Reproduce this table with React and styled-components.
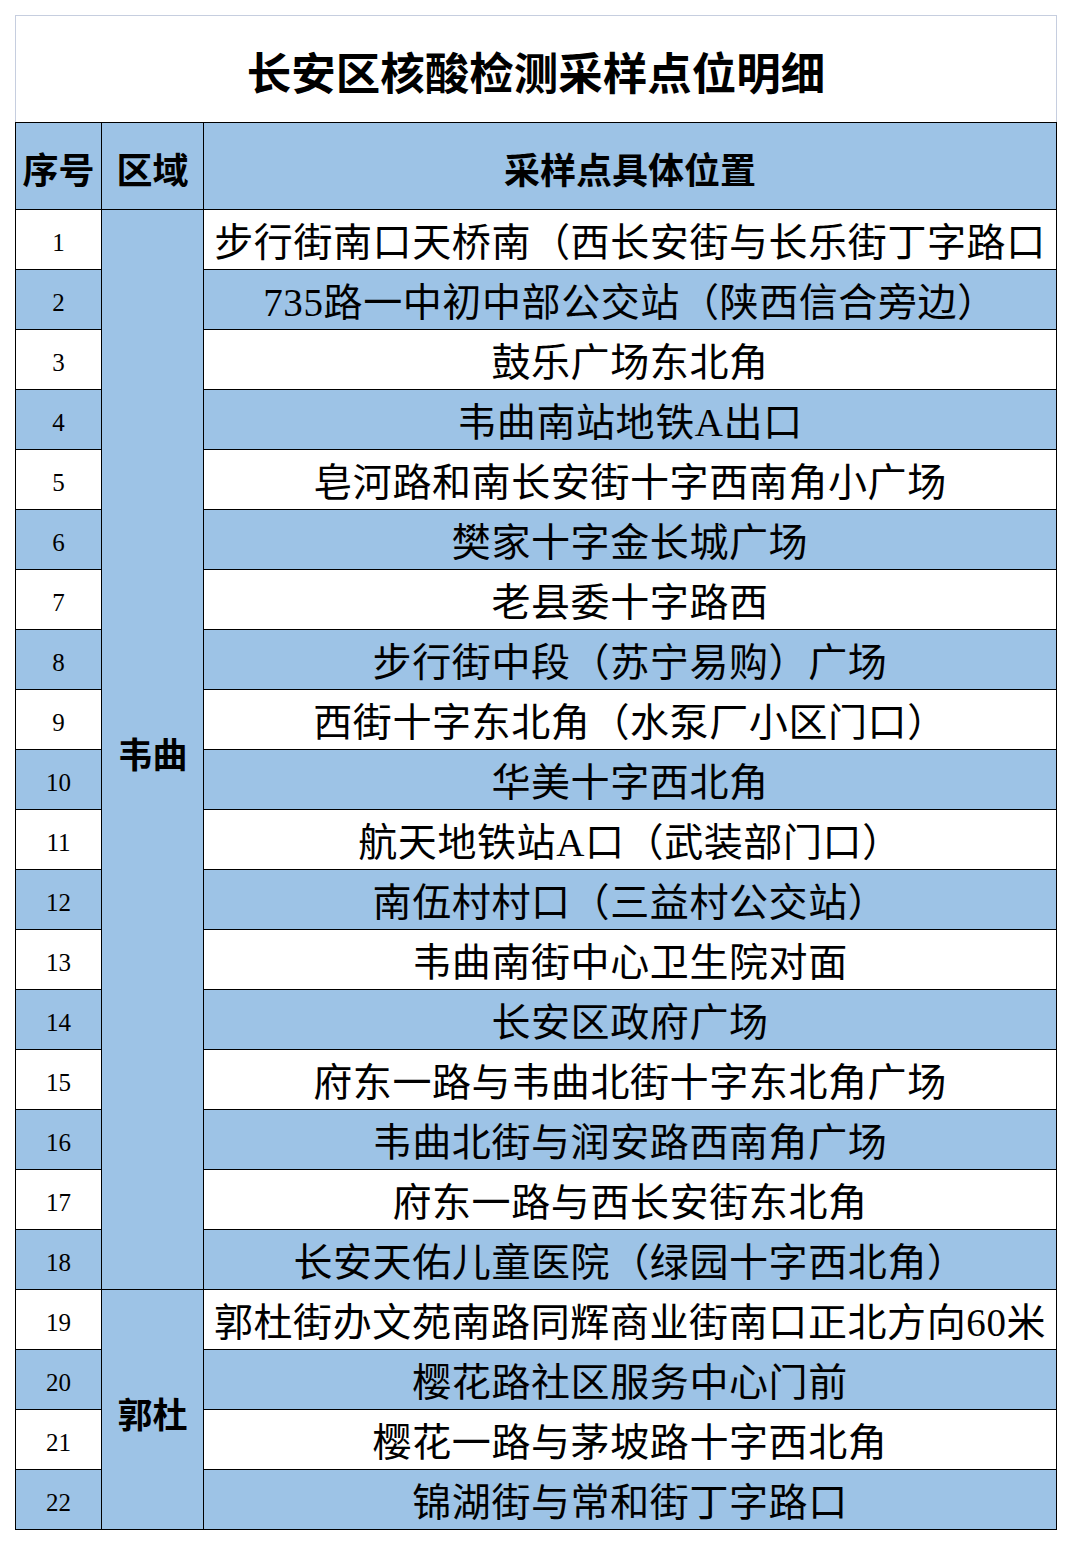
import React from 'react'
import styled, { createGlobalStyle } from 'styled-components'

const GlobalStyle = createGlobalStyle`
    html, body {
        margin: 0;
        padding: 0;
        background: #ffffff;
    }
`

const rows = [
    '步行街南口天桥南（西长安街与长乐街丁字路口',
    '735路一中初中部公交站（陕西信合旁边）',
    '鼓乐广场东北角',
    '韦曲南站地铁A出口',
    '皂河路和南长安街十字西南角小广场',
    '樊家十字金长城广场',
    '老县委十字路西',
    '步行街中段（苏宁易购）广场',
    '西街十字东北角（水泵厂小区门口）',
    '华美十字西北角',
    '航天地铁站A口（武装部门口）',
    '南伍村村口（三益村公交站）',
    '韦曲南街中心卫生院对面',
    '长安区政府广场',
    '府东一路与韦曲北街十字东北角广场',
    '韦曲北街与润安路西南角广场',
    '府东一路与西长安街东北角',
    '长安天佑儿童医院（绿园十字西北角）',
    '郭杜街办文苑南路同辉商业街南口正北方向60米',
    '樱花路社区服务中心门前',
    '樱花一路与茅坡路十字西北角',
    '锦湖街与常和街丁字路口',
]

const regions = { 0: { name: '韦曲', span: 18 }, 18: { name: '郭杜', span: 4 } }

const App = () => {
    return (
        <Page>
            <GlobalStyle />
            <Sheet>
                <Title>长安区核酸检测采样点位明细</Title>
                <Table>
                    <colgroup>
                        <col style={{ width: 86 }} />
                        <col style={{ width: 102 }} />
                        <col />
                    </colgroup>
                    <thead>
                        <tr>
                            <HeadCell>序号</HeadCell>
                            <HeadCell>区域</HeadCell>
                            <HeadCell>采样点具体位置</HeadCell>
                        </tr>
                    </thead>
                    <tbody>
                        {rows.map((place, i) => (
                            <Row key={i}>
                                <NumCell $shaded={i % 2 === 1}>{i + 1}</NumCell>
                                {regions[i] && (
                                    <RegionCell rowSpan={regions[i].span}>{regions[i].name}</RegionCell>
                                )}
                                <PlaceCell $shaded={i % 2 === 1}>
                                    <PlaceText>{place}</PlaceText>
                                </PlaceCell>
                            </Row>
                        ))}
                    </tbody>
                </Table>
            </Sheet>
        </Page>
    )
}

const Page = styled.div`
    width: 1072px;
    min-height: 1545px;
    padding: 15px 0 0 15px;
    box-sizing: border-box;
    background: #ffffff;
`

const Sheet = styled.div`
    width: 1042px;
    display: flex;
    flex-direction: column;
`

const Title = styled.div`
    height: 107px;
    border: 1px solid #c6cedf;
    border-bottom: none;
    display: flex;
    align-items: center;
    justify-content: center;
    padding-top: 2px;
    box-sizing: border-box;
    font-family: 'Liberation Serif', 'Noto Sans CJK SC', serif;
    font-size: 44.5px;
    font-weight: 700;
    color: #000000;
`

const Table = styled.table`
    width: 1042px;
    table-layout: fixed;
    border-collapse: collapse;
    font-family: 'Liberation Serif', 'Noto Sans CJK SC', serif;
    color: #000000;

    td, th {
        border: 1.5px solid #000000;
        padding: 0;
        text-align: center;
        vertical-align: middle;
        box-sizing: border-box;
    }
`

const HeadCell = styled.th`
    height: 87px;
    background: #9dc3e6;
    font-size: 36px;
    font-weight: 700;
    padding-top: 3px !important;
`

const Row = styled.tr`
    height: 60px;
`

const NumCell = styled.td`
    height: 60px;
    background: ${p => (p.$shaded ? '#9dc3e6' : '#ffffff')};
    font-size: 25px;
    padding-top: 6px !important;
`

const RegionCell = styled.td`
    background: #9dc3e6;
    font-size: 35px;
    font-weight: 700;
    padding-top: 6px !important;
`

const PlaceCell = styled.td`
    height: 60px;
    background: ${p => (p.$shaded ? '#9dc3e6' : '#ffffff')};
    overflow: hidden;
`

const PlaceText = styled.div`
    white-space: nowrap;
    overflow: hidden;
    font-size: 39px;
    line-height: 50px;
    padding-top: 6px;
    letter-spacing: 0.6px;
`

export default App
